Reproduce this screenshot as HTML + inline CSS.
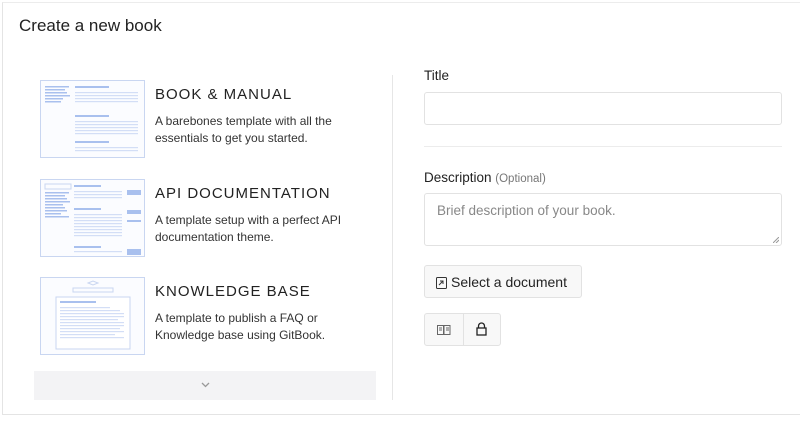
<!DOCTYPE html>
<html><head><meta charset="utf-8"><style>
*{box-sizing:border-box;margin:0;padding:0}
body{width:800px;height:421px;background:#fff;font-family:"Liberation Sans",sans-serif;color:#222;position:relative;overflow:hidden}
.abs{position:absolute}
.frame{left:2px;top:2px;width:800px;height:413px;border-left:1px solid #e4e4e4;border-top:1px solid #ececec;border-bottom:1px solid #e4e4e4}
h1{position:absolute;left:19px;top:16px;font-size:17px;font-weight:normal;color:#222}
.thumb{position:absolute;left:40px;width:105px;height:78px;border:1px solid #c9d6f1;background:#fbfcff}
.tt{position:absolute;left:155px;font-size:15px;letter-spacing:1px;color:#222}
.td{position:absolute;left:155px;font-size:12px;line-height:17px;color:#333;width:220px}
.more{left:34px;top:371px;width:342px;height:29px;background:#f3f3f5}
.vdiv{left:392px;top:75px;width:1px;height:325px;background:#e6e6e6}
.label{position:absolute;left:424px;font-size:13.5px;color:#222}
.input{position:absolute;left:424px;width:358px;border:1px solid #e2e2e2;border-radius:3px;background:#fff}
.btn{position:absolute;border:1px solid #e2e2e2;border-radius:3px;background:#f8f8f8}
</style></head><body>
<div class="abs frame"></div>
<h1>Create a new book</h1>

<div class="thumb" style="top:80px"><svg width="103" height="76">
<g fill="#a9c0ee"><rect x="4" y="5" width="24" height="1.5"/><rect x="4" y="8" width="20" height="1.5"/><rect x="4" y="11" width="22" height="1.5"/><rect x="4" y="14" width="25" height="1.5"/><rect x="4" y="17" width="18" height="1.5"/><rect x="4" y="20" width="16" height="1.5"/>
<rect x="34" y="5" width="34" height="2"/><rect x="34" y="34" width="34" height="2"/><rect x="34" y="60" width="34" height="2"/></g>
<g fill="#d3def6"><rect x="34" y="11" width="63" height="1.2"/><rect x="34" y="14" width="63" height="1.2"/><rect x="34" y="17" width="63" height="1.2"/><rect x="34" y="20" width="63" height="1.2"/>
<rect x="34" y="40" width="63" height="1.2"/><rect x="34" y="43" width="63" height="1.2"/><rect x="34" y="46" width="63" height="1.2"/><rect x="34" y="49" width="63" height="1.2"/><rect x="34" y="52" width="63" height="1.2"/>
<rect x="34" y="66" width="63" height="1.2"/><rect x="34" y="69" width="63" height="1.2"/></g></svg></div>
<div class="tt" style="top:86px">BOOK &amp; MANUAL</div>
<div class="td" style="top:113px">A barebones template with all the essentials to get you started.</div>

<div class="thumb" style="top:179px"><svg width="103" height="76">
<rect x="4" y="4" width="26" height="5" fill="none" stroke="#c9d6f1"/>
<g fill="#a9c0ee"><rect x="4" y="12" width="24" height="1.5"/><rect x="4" y="15" width="20" height="1.5"/><rect x="4" y="18" width="22" height="1.5"/><rect x="4" y="21" width="25" height="1.5"/><rect x="4" y="24" width="18" height="1.5"/><rect x="4" y="27" width="20" height="1.5"/><rect x="4" y="30" width="22" height="1.5"/><rect x="4" y="33" width="16" height="1.5"/><rect x="4" y="36" width="24" height="1.5"/>
<rect x="33" y="5" width="27" height="2"/><rect x="33" y="28" width="27" height="2"/><rect x="33" y="66" width="27" height="2"/>
<rect x="86" y="10" width="14" height="5"/><rect x="86" y="30" width="14" height="4"/><rect x="86" y="40" width="14" height="2"/><rect x="86" y="69" width="14" height="6"/></g>
<g fill="#d3def6"><rect x="33" y="11" width="48" height="1.2"/><rect x="33" y="14" width="48" height="1.2"/><rect x="33" y="17" width="48" height="1.2"/><rect x="33" y="34" width="48" height="1.2"/><rect x="33" y="37" width="48" height="1.2"/><rect x="33" y="40" width="48" height="1.2"/><rect x="33" y="43" width="48" height="1.2"/><rect x="33" y="46" width="48" height="1.2"/><rect x="33" y="49" width="48" height="1.2"/><rect x="33" y="52" width="48" height="1.2"/><rect x="33" y="55" width="48" height="1.2"/><rect x="33" y="71" width="48" height="1.2"/></g></svg></div>
<div class="tt" style="top:185px">API DOCUMENTATION</div>
<div class="td" style="top:212px">A template setup with a perfect API documentation theme.</div>

<div class="thumb" style="top:277px"><svg width="103" height="76">
<path d="M47 5l5-2 5 2-5 2z" fill="none" stroke="#c9d6f1"/>
<rect x="32" y="10" width="40" height="4" fill="none" stroke="#c9d6f1"/>
<rect x="15" y="19" width="74" height="52" fill="#fff" stroke="#c9d6f1"/>
<rect x="19" y="23" width="36" height="2" fill="#a9c0ee"/>
<g fill="#d3def6"><rect x="19" y="29" width="50" height="1.2"/><rect x="19" y="32" width="60" height="1.2"/><rect x="19" y="35" width="64" height="1.2"/><rect x="19" y="38" width="64" height="1.2"/><rect x="19" y="41" width="58" height="1.2"/><rect x="19" y="44" width="64" height="1.2"/><rect x="19" y="47" width="64" height="1.2"/><rect x="19" y="50" width="60" height="1.2"/><rect x="19" y="53" width="64" height="1.2"/><rect x="19" y="56" width="55" height="1.2"/><rect x="19" y="59" width="64" height="1.2"/></g></svg></div>
<div class="tt" style="top:283px">KNOWLEDGE BASE</div>
<div class="td" style="top:310px">A template to publish a FAQ or Knowledge base using GitBook.</div>

<div class="abs more"><svg class="abs" style="left:167px;top:11px" width="9" height="6"><path d="M1 1l3.5 3.5L8 1" fill="none" stroke="#999" stroke-width="1.3"/></svg></div>
<div class="abs vdiv"></div>

<div class="label" style="top:68px">Title</div>
<div class="input" style="top:92px;height:33px"></div>
<div class="abs" style="left:424px;top:146px;width:358px;height:1px;background:#ececec"></div>
<div class="label" style="top:170px">Description <span style="font-size:11.5px;color:#777">(Optional)</span></div>
<div class="input" style="top:193px;height:53px"><span class="abs" style="left:12px;top:9px;font-size:13.5px;color:#888">Brief description of your book.</span>
<svg class="abs" style="right:2px;bottom:2px" width="6" height="6"><path d="M0 6L6 0M3 6L6 3" stroke="#999"/></svg></div>

<div class="btn" style="left:424px;top:265px;width:158px;height:33px"><svg class="abs" style="left:11px;top:11px" width="11" height="12"><rect x="0.5" y="0.5" width="10" height="11" rx="1" fill="none" stroke="#333"/><path d="M3 8l4-4M4 4h3v3" fill="none" stroke="#333"/></svg><span class="abs" style="left:26px;top:8px;font-size:14px;color:#222">Select a document</span></div>
<div class="btn" style="left:424px;top:313px;width:77px;height:33px">
<div class="abs" style="left:38px;top:0;width:1px;height:31px;background:#e2e2e2"></div>
<svg class="abs" style="left:12px;top:11px" width="14" height="10"><rect x="0.5" y="0.5" width="6" height="9" fill="none" stroke="#666"/><rect x="7" y="0.5" width="6" height="9" fill="none" stroke="#666"/><path d="M2 3h3M2 5h3M9 3h3M9 5h3" stroke="#666"/></svg>
<svg class="abs" style="left:51px;top:8px" width="11" height="14"><path d="M2.5 6V4a3 3 0 0 1 6 0v2" fill="none" stroke="#222" stroke-width="1.3"/><rect x="1" y="6" width="9" height="7" fill="none" stroke="#222" stroke-width="1.3"/></svg>
</div>
</body></html>
